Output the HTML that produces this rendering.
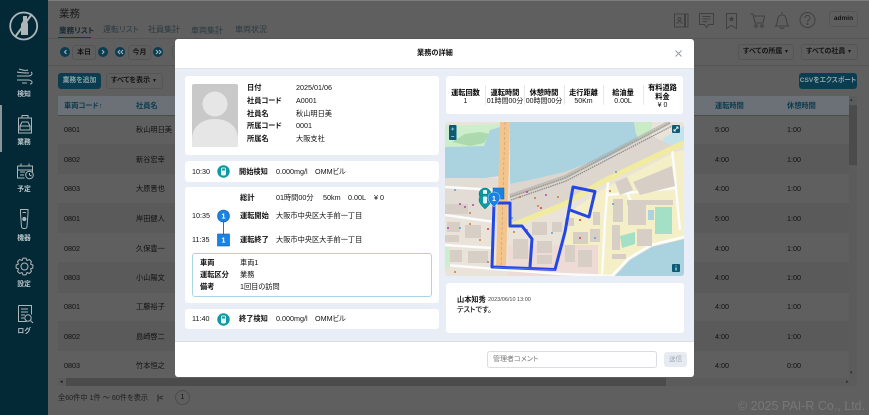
<!DOCTYPE html>
<html lang="ja"><head><meta charset="utf-8"><title>業務</title>
<style>
html,body{margin:0;padding:0}
body{width:869px;height:415px;overflow:hidden;position:relative;background:#5f5f5f;font-family:"Liberation Sans","Noto Sans CJK JP",sans-serif;color:#111;font-feature-settings:"palt"}
#w{position:absolute;left:0;top:0;width:869px;height:415px;filter:blur(.3px)}
.a,.t{position:absolute}
.t{white-space:nowrap;line-height:10px;font-size:7.2px}
.b{font-weight:700}
.card{position:absolute;background:#fff;border-radius:3px}
.row{position:absolute;left:58px;width:791px}
.sl{position:absolute;left:0;width:48px;text-align:center;font-size:6.8px;font-weight:700;color:#b9c3c8;line-height:9px}
.tab{color:#2b3a40;font-size:8px}
.btn{position:absolute;border:1px solid #555;border-radius:3px;box-sizing:border-box;font-size:7px;color:#161616;text-align:center;font-weight:700}
.sum{position:absolute;text-align:center;line-height:9px;font-size:7px;width:39px;top:88px}
.sum b{display:block;font-size:7.2px;line-height:9px;color:#000}
.sep{position:absolute;top:85px;width:1px;height:20px;background:#e8e8e8}
svg{position:absolute;overflow:visible}
</style></head><body><div id="w">

<div class="a" style="left:0;top:0;width:869px;height:1px;background:#7d7d7d"></div>
<!-- sidebar -->
<div class="a" style="left:0;top:0;width:48px;height:415px;background:#032937"></div>
<div class="a" style="left:0;top:105px;width:2px;height:47px;background:#8b9599"></div>
<svg style="left:0;top:0" width="48" height="350" fill="none" stroke="#aeb6b9" stroke-width="1">
<circle cx="23.700" cy="26" r="13.500" stroke-width="1.800"/><path d="M32 14 15 37" stroke-width="2"/><path d="M23 16h4v5l1 3v11h-7V24l2-3z" fill="#aeb6b9" stroke="none"/>
<path d="M19 69c3 1 7 2 9 1M17 72c4 1 9 1 12 1M17 76h11c4 0 5-3 3-4M17 80h11c5 0 5 4 2 4M22 83h5"/>
<path d="M18.500 118h13v15h-13zM22 118v-2.500h6v2.500"/><path d="M22 122h6l2 4v4H20v-4zM20 126h10"/>
<path d="M17.500 166h15v6M17.500 166v12h7M17.500 170h15M21 163.500v3M29 163.500v3M20 172h5M20 175h4"/><circle cx="29.500" cy="175" r="3.800"/><path d="M29.500 173v2l2 1"/>
<path d="M20.500 209.500h7.500v4l-1 13a2 2 0 0 1-2 2h-1.500a2 2 0 0 1-2-2l-1-13z"/><circle cx="24.300" cy="219" r="1.600" fill="#aeb6b9"/><path d="M22.500 212.500h3.500"/>
<polygon transform="translate(24.500 266.500)" stroke-linejoin="round" points="8.370,-1.480 8.370,1.480 6,2.490 6.960,4.880 4.880,6.960 2.490,6 1.480,8.370 -1.480,8.370 -2.490,6 -4.880,6.960 -6.960,4.880 -6,2.490 -8.370,1.480 -8.370,-1.480 -6,-2.490 -6.960,-4.880 -4.880,-6.960 -2.490,-6 -1.480,-8.370 1.480,-8.370 2.490,-6 4.880,-6.960 6.960,-4.880 6,-2.490"/><circle cx="24.500" cy="266.500" r="3.500"/>
<path d="M18.500 305.500h13v9M18.500 305.500v16h8M21 309h7M21 312h7M21 315h4M21 318h3"/><circle cx="28" cy="318" r="3.200"/><path d="M30.500 320.500l2.500 2.500"/>
</svg>
<div class="sl" style="top:89.500px">検知</div>
<div class="sl" style="top:138px">業務</div>
<div class="sl" style="top:185px">予定</div>
<div class="sl" style="top:234px">機器</div>
<div class="sl" style="top:280px">設定</div>
<div class="sl" style="top:327px">ログ</div>

<!-- header -->
<div class="t" style="left:59px;top:8px;font-size:10.500px;line-height:12px;color:#1b1b1b">業務</div>
<div class="t b" style="left:59px;top:25.500px;color:#18282e;font-size:7.600px">業務リスト</div>
<div class="a" style="left:58px;top:36.500px;width:33px;height:1.500px;background:#0b3d50"></div>
<div class="t tab" style="left:103px;top:25px">運転リスト</div>
<div class="t tab" style="left:148px;top:25px">社員集計</div>
<div class="t tab" style="left:191px;top:25.500px">車両集計</div>
<div class="t tab" style="left:235px;top:25px">車両状況</div>
<div class="a" style="left:48px;top:38px;width:821px;height:1px;background:#565656"></div>
<div class="a" style="left:48px;top:65px;width:821px;height:1px;background:#565656"></div>

<svg style="left:60px;top:47px" width="110" height="12">
<g fill="#093c50"><circle cx="5" cy="5" r="5"/><circle cx="43" cy="5" r="5"/><circle cx="60" cy="5" r="5"/><circle cx="98" cy="5" r="5"/></g>
<g fill="none" stroke="#a8b5ba" stroke-width="1.100"><path d="M6.500 3 4.500 5l2 2M42 3l2 2-2 2M60 3 58 5l2 2M63 3 61 5l2 2M96 3l2 2-2 2M99 3l2 2-2 2"/></g>
</svg>
<div class="btn" style="left:72px;top:45px;width:24px;height:15px;line-height:13px">本日</div>
<div class="btn" style="left:128px;top:45px;width:23px;height:15px;line-height:13px">今月</div>
<div class="btn" style="left:172px;top:45px;width:23px;height:15px"></div>

<div class="a" style="left:58px;top:73px;width:43px;height:16px;background:#0b3d50;border-radius:3px;color:#8fa0a8;font-size:6.800px;line-height:16px;text-align:center;font-weight:700">業務を追加</div>
<div class="btn" style="left:106px;top:73px;width:57px;height:16px;line-height:14px;text-align:left;padding-left:4px">すべてを表示</div><div class="t" style="left:153px;top:76px;font-size:6px;color:#161616">▾</div>
<div class="btn" style="left:738px;top:44px;width:56px;height:16px;line-height:14px;text-align:left;padding-left:4px">すべての所属</div><div class="t" style="left:785px;top:47px;font-size:6px;color:#161616">▾</div>
<div class="btn" style="left:801px;top:44px;width:57px;height:16px;line-height:14px;text-align:left;padding-left:4px">すべての社員</div><div class="t" style="left:848px;top:47px;font-size:6px;color:#161616">▾</div>
<div class="a" style="left:799px;top:73px;width:58px;height:16px;background:#0b3d50;border-radius:3px;color:#8fa0a8;font-size:6.600px;line-height:16px;text-align:center;font-weight:700">CSVをエクスポート</div>

<svg style="left:673px;top:11px" width="190" height="18" fill="none" stroke="#404040" stroke-width="1">
<path d="M1.500 3h10v13h-10zM12.500 3H15v13h-2.500z"/><circle cx="6.500" cy="8" r="1.500"/><path d="M4 13c0-3 5-3 5 0"/>
<path d="M26.500 2.500h14v11h-5l-2 3-2-3h-5zM29.500 5.500h8M29.500 8h8M29.500 10.500h5"/>
<path d="M53.500 2.500h10v15l-5-3-5 3z"/><path d="M58.500 5l1 2h2l-1.500 1.500.5 2-2-1-2 1 .5-2L55.500 7h2z" fill="#404040" stroke="none"/>
<path d="M77 3h3l2 9h8l1.500-7H81"/><circle cx="83" cy="15" r="1.300"/><circle cx="89" cy="15" r="1.300"/>
<path d="M102.500 15c2-2 1.500-4 2.500-8 1-4 7-4 8 0 1 4 .5 6 2.500 8zM107 16c.5 2 3.500 2 4 0M109 3V1"/>
<circle cx="134.500" cy="9" r="7.500"/><path d="M132 7c0-3.500 5-3.500 5 0 0 2-2.500 2-2.500 4"/><circle cx="134.500" cy="13" r=".5"/>
</svg>
<div class="btn" style="left:829px;top:11px;width:29px;height:16px;line-height:14px;font-size:6.500px">admin</div>

<!-- table -->
<div class="a" style="left:58px;top:96px;width:791px;height:19px;background:#6c7177;border-bottom:1.500px solid #4a4a4a"></div>
<div class="t b" style="left:64px;top:101px;color:#0a3b4f">車両コード</div><div class="t b" style="left:99px;top:101px;color:#0a3b4f">↑</div>
<div class="t b" style="left:136px;top:101px;color:#0a3b4f">社員名</div>
<div class="t b" style="left:715px;top:101px;color:#0a3b4f">運転時間</div>
<div class="t b" style="left:787px;top:101px;color:#0a3b4f">休憩時間</div>

<div class="row" style="top:144px;height:30px;background:#5a5a5a"></div>
<div class="row" style="top:203px;height:30px;background:#5a5a5a"></div>
<div class="row" style="top:262px;height:31px;background:#5a5a5a"></div>
<div class="row" style="top:321px;height:30px;background:#5a5a5a"></div>

<div class="t" style="left:64px;top:125px">0801</div><div class="t" style="left:136px;top:125px">秋山明日美</div><div class="t" style="left:715px;top:125px">5:00</div><div class="t" style="left:787px;top:125px">1:00</div>
<div class="t" style="left:64px;top:155px">0802</div><div class="t" style="left:136px;top:155px">新谷宏幸</div><div class="t" style="left:715px;top:155px">4:00</div><div class="t" style="left:787px;top:155px">1:00</div>
<div class="t" style="left:64px;top:184px">0803</div><div class="t" style="left:136px;top:184px">大原晋也</div><div class="t" style="left:715px;top:184px">4:00</div><div class="t" style="left:787px;top:184px">1:00</div>
<div class="t" style="left:64px;top:214px">0801</div><div class="t" style="left:136px;top:214px">岸田健人</div><div class="t" style="left:715px;top:214px">5:00</div><div class="t" style="left:787px;top:214px">1:00</div>
<div class="t" style="left:64px;top:244px">0802</div><div class="t" style="left:136px;top:244px">久保豊一</div><div class="t" style="left:715px;top:244px">4:00</div><div class="t" style="left:787px;top:244px">1:00</div>
<div class="t" style="left:64px;top:273px">0803</div><div class="t" style="left:136px;top:273px">小山陽文</div><div class="t" style="left:715px;top:273px">4:00</div><div class="t" style="left:787px;top:273px">1:00</div>
<div class="t" style="left:64px;top:302px">0801</div><div class="t" style="left:136px;top:302px">工藤裕子</div><div class="t" style="left:715px;top:302px">4:00</div><div class="t" style="left:787px;top:302px">1:00</div>
<div class="t" style="left:64px;top:332px">0802</div><div class="t" style="left:136px;top:332px">島崎啓二</div><div class="t" style="left:715px;top:332px">4:00</div><div class="t" style="left:787px;top:332px">1:00</div>
<div class="t" style="left:64px;top:361px">0803</div><div class="t" style="left:136px;top:361px">竹本恒之</div><div class="t" style="left:715px;top:361px">4:00</div><div class="t" style="left:787px;top:361px">0:00</div>

<!-- scrollbars -->
<div class="a" style="left:849px;top:96px;width:8px;height:282px;background:#5b5b5b"></div>
<div class="a" style="left:849px;top:105px;width:8px;height:60px;background:#4b4b4b"></div>
<div class="a" style="left:58px;top:378px;width:799px;height:8px;background:#5b5b5b"></div>
<div class="a" style="left:66px;top:378px;width:600px;height:8px;background:#4b4b4b"></div>
<div class="t" style="left:60px;top:377px;font-size:5px">◂</div>
<div class="t" style="left:846px;top:377px;font-size:5px;color:#2a2a2a">▸</div>
<div class="t" style="left:850px;top:95px;font-size:5px;color:#2a2a2a">▴</div>
<div class="t" style="left:850px;top:368px;font-size:5px;color:#2a2a2a">▾</div>

<!-- pager -->
<div class="t" style="left:58px;top:393px;color:#1e1e1e">全60件中 1件 〜 60件を表示</div>
<div class="t b" style="left:157px;top:393px;color:#1e1e1e">|&lt;</div>
<div class="a" style="left:175px;top:390px;width:15px;height:15px;border:1px solid #4c4c4c;border-radius:50%;box-sizing:border-box;font-size:7px;line-height:13px;text-align:center">1</div>
<div class="t" style="left:738px;top:399px;font-size:12.500px;line-height:14px;color:#777">© 2025 PAI-R Co., Ltd.</div>

<!-- modal -->
<div class="a" style="left:174.500px;top:39px;width:519.500px;height:338px;background:#fff;border-radius:3px"></div>
<div class="a" style="left:174.500px;top:68px;width:519.500px;height:274px;background:#e9edf5;border-top:1px solid #e0e2e6;border-bottom:1px solid #dcdde0;box-sizing:border-box"></div>
<div class="t b" style="left:417px;top:48px;color:#111">業務の詳細</div>
<svg style="left:675px;top:50px" width="7" height="7" stroke="#9aa0a6" stroke-width="1.100"><path d="M0.500 0.500 6.500 6.500M6.500 0.500 0.500 6.500"/></svg>

<!-- card 1 -->
<div class="card" style="left:185px;top:76px;width:254px;height:79px"></div>
<svg style="left:192px;top:84px" width="46" height="63"><rect width="46" height="63" rx="2" fill="#c9c9c9"/><circle cx="23" cy="20" r="12.500" fill="#e6e6e6"/><path d="M0 63V56C0 42 10 35 23 35s23 7 23 21v7z" fill="#e6e6e6"/></svg>
<div class="t b" style="left:247px;top:83px">日付</div><div class="t" style="left:296px;top:83px">2025/01/06</div>
<div class="t b" style="left:247px;top:96px">社員コード</div><div class="t" style="left:296px;top:96px">A0001</div>
<div class="t b" style="left:247px;top:109px">社員名</div><div class="t" style="left:296px;top:109px">秋山明日美</div>
<div class="t b" style="left:247px;top:121px">所属コード</div><div class="t" style="left:296px;top:121px">0001</div>
<div class="t b" style="left:247px;top:134px">所属名</div><div class="t" style="left:296px;top:134px">大阪支社</div>

<!-- card 2 -->
<div class="card" style="left:185px;top:161px;width:254px;height:20.500px"></div>
<div class="t" style="left:192px;top:167px">10:30</div>
<svg style="left:217px;top:165px" width="13" height="13"><circle cx="6.500" cy="6.500" r="6.200" fill="#0e98a0"/><rect x="4" y="2.500" width="5" height="8" rx="1.500" fill="#e8f4f5"/><rect x="5" y="3.500" width="3" height="2" fill="#0e98a0"/></svg>
<div class="t b" style="left:239px;top:167px">開始検知</div>
<div class="t" style="left:276px;top:167px">0.000mg/l</div>
<div class="t" style="left:315px;top:167px">OMMビル</div>

<!-- card 3 -->
<div class="card" style="left:185px;top:186.500px;width:254px;height:116.500px"></div>
<div class="t b" style="left:240px;top:193px">総計</div>
<div class="t" style="left:276px;top:193px">01時間00分</div>
<div class="t" style="left:323px;top:193px">50km</div>
<div class="t" style="left:348px;top:193px">0.00L</div>
<div class="t" style="left:374px;top:193px">¥ 0</div>
<div class="t" style="left:192px;top:211px">10:35</div>
<div class="t" style="left:192px;top:235px">11:35</div>
<svg style="left:217px;top:209px" width="13" height="38">
<path d="M6.500 6V30" stroke="#666" stroke-width="1"/>
<circle cx="6.500" cy="7" r="6" fill="#1a82e2" stroke="#0d5fa8" stroke-width=".6"/>
<rect x=".5" y="25" width="12" height="12" fill="#1a82e2" stroke="#0d5fa8" stroke-width=".6"/>
<text x="6.500" y="9.700" font-size="7.500" font-weight="700" fill="#fff" text-anchor="middle" font-family="Liberation Sans">1</text>
<text x="6.500" y="33.700" font-size="7.500" font-weight="700" fill="#fff" text-anchor="middle" font-family="Liberation Sans">1</text>
</svg>
<div class="t b" style="left:240px;top:211px">運転開始</div><div class="t" style="left:276px;top:211px">大阪市中央区大手前一丁目</div>
<div class="t b" style="left:240px;top:235px">運転終了</div><div class="t" style="left:276px;top:235px">大阪市中央区大手前一丁目</div>
<div class="a" style="left:192px;top:253px;width:240px;height:44px;border:1px solid #a9d6e6;border-radius:3px;box-sizing:border-box"></div>
<div class="t b" style="left:200px;top:258px">車両</div><div class="t" style="left:240px;top:258px">車両1</div>
<div class="t b" style="left:200px;top:270px">運転区分</div><div class="t" style="left:240px;top:270px">業務</div>
<div class="t b" style="left:200px;top:282px">備考</div><div class="t" style="left:240px;top:282px">1回目の訪問</div>

<!-- card 4 -->
<div class="card" style="left:185px;top:309px;width:254px;height:20px"></div>
<div class="t" style="left:192px;top:314px">11:40</div>
<svg style="left:217px;top:312.500px" width="13" height="13"><circle cx="6.500" cy="6.500" r="6.200" fill="#0e98a0"/><rect x="4" y="2.500" width="5" height="8" rx="1.500" fill="#e8f4f5"/><rect x="5" y="3.500" width="3" height="2" fill="#0e98a0"/></svg>
<div class="t b" style="left:239px;top:314px">終了検知</div>
<div class="t" style="left:276px;top:314px">0.000mg/l</div>
<div class="t" style="left:315px;top:314px">OMMビル</div>

<!-- summary -->
<div class="card" style="left:445.500px;top:76px;width:237.500px;height:38px"></div>
<div class="sum" style="left:446px"><b>運転回数</b>1</div>
<div class="sum" style="left:485.500px"><b>運転時間</b>01時間00分</div>
<div class="sum" style="left:524.500px"><b>休憩時間</b>00時間00分</div>
<div class="sum" style="left:564px"><b>走行距離</b>50Km</div>
<div class="sum" style="left:603.500px"><b>給油量</b>0.00L</div>
<div class="sum" style="left:643px;top:82.500px"><b>有料道路<br>料金</b>¥ 0</div>
<div class="sep" style="left:485px"></div><div class="sep" style="left:524px"></div><div class="sep" style="left:564px"></div><div class="sep" style="left:603px"></div><div class="sep" style="left:643px"></div>

<!-- map -->
<svg style="left:445px;top:122px;overflow:hidden;border-radius:3px" width="239" height="154" viewBox="445 122 239 154">
<rect x="445" y="122" width="239" height="154" fill="#e9e3da"/>
<path d="M445 126L500 124 499 130 490 130 484 146 445 147z" fill="#cdeeca"/>
<path d="M452 142L465 134 480 132 490 134 484 143 470 146z" fill="#acdaae"/>
<path d="M445 147L484 146 490 130 500 127V176L470 180 445 178z" fill="#aad3df"/>
<path d="M510 122H634L636 134 642 139 637 140 605 159 585 164 565 172 530 180 510 184z" fill="#aad3df"/>
<path d="M634 122H652V136L638 140z" fill="#c9ebc6"/>
<path d="M662 139L684 126V142L668 147z" fill="#c5e3ea"/>
<path d="M510 184L530 180 565 172 585 164 605 159 637 140 650 135 675 147 602 182 565 204 508 227z" fill="#dcd6ce"/>
<path d="M445 178H500L508 227 495 222 445 215z" fill="#e2dcd4"/>
<path d="M565 215L602 190 675 152 684 150V240L650 245 625 262 610 276H598V245H565z" fill="#f4efc6"/>
<path d="M508 245H598V276H508z" fill="#eedbd6"/>
<path d="M684 239L652 247 630 260 615 276H684z" fill="#aad3df"/>
<path d="M684 237L651 245 628 259 612 276" stroke="#fff" stroke-width="2.500" fill="none"/>
<path d="M445 187L495 190M445 215L495 222M445 245L492 248M445 265L560 274 612 276M608 182L605 220 602 276M608 195L675 188M672 148L680 230M626 190L633 206" stroke="#fbfbfb" stroke-width="2.500" fill="none"/>
<path d="M508 227L565 204 602 182 675 147 684 143" stroke="#f1eba0" stroke-width="5.500" fill="none"/>
<g fill="#d7cfc5">
<rect x="445" y="204" width="23" height="10"/><rect x="447" y="222" width="13" height="10"/><rect x="465" y="225" width="16" height="13"/><rect x="445" y="235" width="14" height="7"/><rect x="468" y="251" width="20" height="12"/><rect x="445" y="250" width="17" height="12"/>
<rect x="513" y="239" width="15" height="20"/><rect x="532" y="222" width="15" height="13"/><rect x="537" y="241" width="15" height="12"/><rect x="537" y="255" width="15" height="9"/><rect x="552" y="222" width="10" height="10"/>
<path d="M633 182L672 166 675 186 640 195zM615 182L627 177 633 190 620 195z"/>
<rect x="613" y="199" width="10" height="23"/><rect x="628" y="205" width="18" height="20"/><rect x="612" y="225" width="8" height="25"/><rect x="637" y="229" width="15" height="17"/><rect x="627" y="200" width="46" height="5"/>
<rect x="573" y="232" width="15" height="12"/><rect x="593" y="212" width="7" height="13"/><rect x="590" y="229" width="10" height="13"/><rect x="565" y="245" width="10" height="17"/><rect x="578" y="250" width="14" height="17"/><rect x="612" y="254" width="14" height="5"/><rect x="565" y="218" width="9" height="8"/>
</g>
<path d="M445 247H450V267H445z" fill="#cdeeca"/>
<path d="M655 207H672V234H655zM620 236L635 232V244L622 248z" fill="#a3e0c5"/>
<path d="M648 210H654V220H648z" fill="#a9d3e0"/>
<path d="M500 122H510L506 268H496z" fill="#f3c58d"/>
<path d="M505 122L501 268" stroke="#c8a27a" stroke-width=".7" stroke-dasharray="3 2"/>
<path d="M510 197L565 178 670 123M511 200L566 181 672 126" stroke="#8f8d8b" stroke-width="1.300" stroke-dasharray="1.500 .8" fill="none"/>
<path d="M510 196L565 177 670 122" stroke="#aaa7a3" stroke-width="4" fill="none" opacity=".55"/>
<g fill="#d0782e"><circle cx="470" cy="213" r="1"/><circle cx="520" cy="197" r="1"/><circle cx="535" cy="198" r="1"/><circle cx="558" cy="197" r="1"/><circle cx="455" cy="272" r="1"/><circle cx="480" cy="240" r="1"/><circle cx="514" cy="232" r="1"/><circle cx="527" cy="230" r="1"/><circle cx="470" cy="224" r="1"/><circle cx="488" cy="262" r="1"/><circle cx="538" cy="206" r="1"/><circle cx="610" cy="191" r="1"/></g>
<g fill="#b344b0"><circle cx="465" cy="207" r="1"/><circle cx="473" cy="205" r="1"/><circle cx="527" cy="192" r="1"/><circle cx="448" cy="228" r="1"/><circle cx="460" cy="204" r="1"/><circle cx="546" cy="195" r="1"/></g>
<g fill="#5aa0d8"><circle cx="460" cy="228" r="1"/><circle cx="455" cy="190" r="1"/><circle cx="512" cy="218" r="1"/><circle cx="552" cy="233" r="1"/><circle cx="613" cy="204" r="1"/><circle cx="595" cy="238" r="1"/><circle cx="616" cy="172" r="1"/></g>
<g fill="#d93a3a"><circle cx="488" cy="229" r="1"/><circle cx="580" cy="220" r="1"/><circle cx="580" cy="238" r="1"/><circle cx="541" cy="208" r="1"/></g>
<path d="M494 203H510V226H522L532 239 530 267M494 203L492 267 555 269.500 565 232 573 187 595 191.500 589 217 570 210" fill="none" stroke="#2447e4" stroke-width="3" stroke-linejoin="round"/>
<path d="M494 267.500L555 270" stroke="#5c78ee" stroke-width=".7"/>
<rect x="493" y="188" width="11" height="11" fill="#1a82e2" stroke="#0d5fa8" stroke-width=".5"/>
<circle cx="485" cy="194" r="6" fill="#0e98a0" stroke="#0a6f78" stroke-width=".5"/>
<rect x="483" y="190" width="4" height="7" rx="1" fill="#dff"/>
<path d="M491 200c0-8-12-8-12 0 0 4 6 9 6 9s6-5 6-9z" fill="#0e98a0" stroke="#0a6f78" stroke-width=".5"/>
<rect x="483" y="196.500" width="4" height="7" rx="1" fill="#dff"/>
<path d="M500 198c0-8-12-8-12 0 0 4 6 9 6 9s6-5 6-9z" fill="#1a82e2" stroke="#fff" stroke-width=".4"/>
<text x="494" y="201" font-size="7" font-weight="700" fill="#fff" text-anchor="middle" font-family="Liberation Sans">1</text>
<rect x="449" y="125" width="7.500" height="15" rx="1" fill="#0b5a78"/>
<path d="M451.200 129h3M452.700 127.500v3M451.200 136.500h3" stroke="#b8d4df" stroke-width=".7"/>
<rect x="672" y="125" width="8" height="8" rx="1" fill="#0b5a78"/>
<path d="M674 131l4-4M674 129v2h2M676 127h2v2" stroke="#fff" stroke-width=".8" fill="none"/>
<rect x="672" y="264" width="8" height="8" rx="1" fill="#0b5a78"/>
<path d="M676 265.500v.8M676 267.500v3" stroke="#fff" stroke-width="1"/>
</svg>

<!-- comment card -->
<div class="card" style="left:445.500px;top:283px;width:238px;height:50px"></div>
<div class="t b" style="left:457px;top:295px">山本知秀</div>
<div class="t" style="left:488px;top:295px;font-size:5.500px;color:#444">2023/06/10 13:00</div>
<div class="t" style="left:457px;top:305px;font-weight:500">テストです。</div>

<!-- footer -->
<div class="a" style="left:487px;top:351px;width:170px;height:17px;border:1px solid #d9dce1;border-radius:3px;box-sizing:border-box;background:#fff"></div>
<div class="t" style="left:493px;top:355px;color:#777;font-size:7px">管理者コメント</div>
<div class="a" style="left:664px;top:352px;width:23px;height:15px;background:#e7ebf1;border-radius:3px;color:#9aa5b1;font-size:6.500px;line-height:15px;text-align:center">送信</div>

</div></body></html>
